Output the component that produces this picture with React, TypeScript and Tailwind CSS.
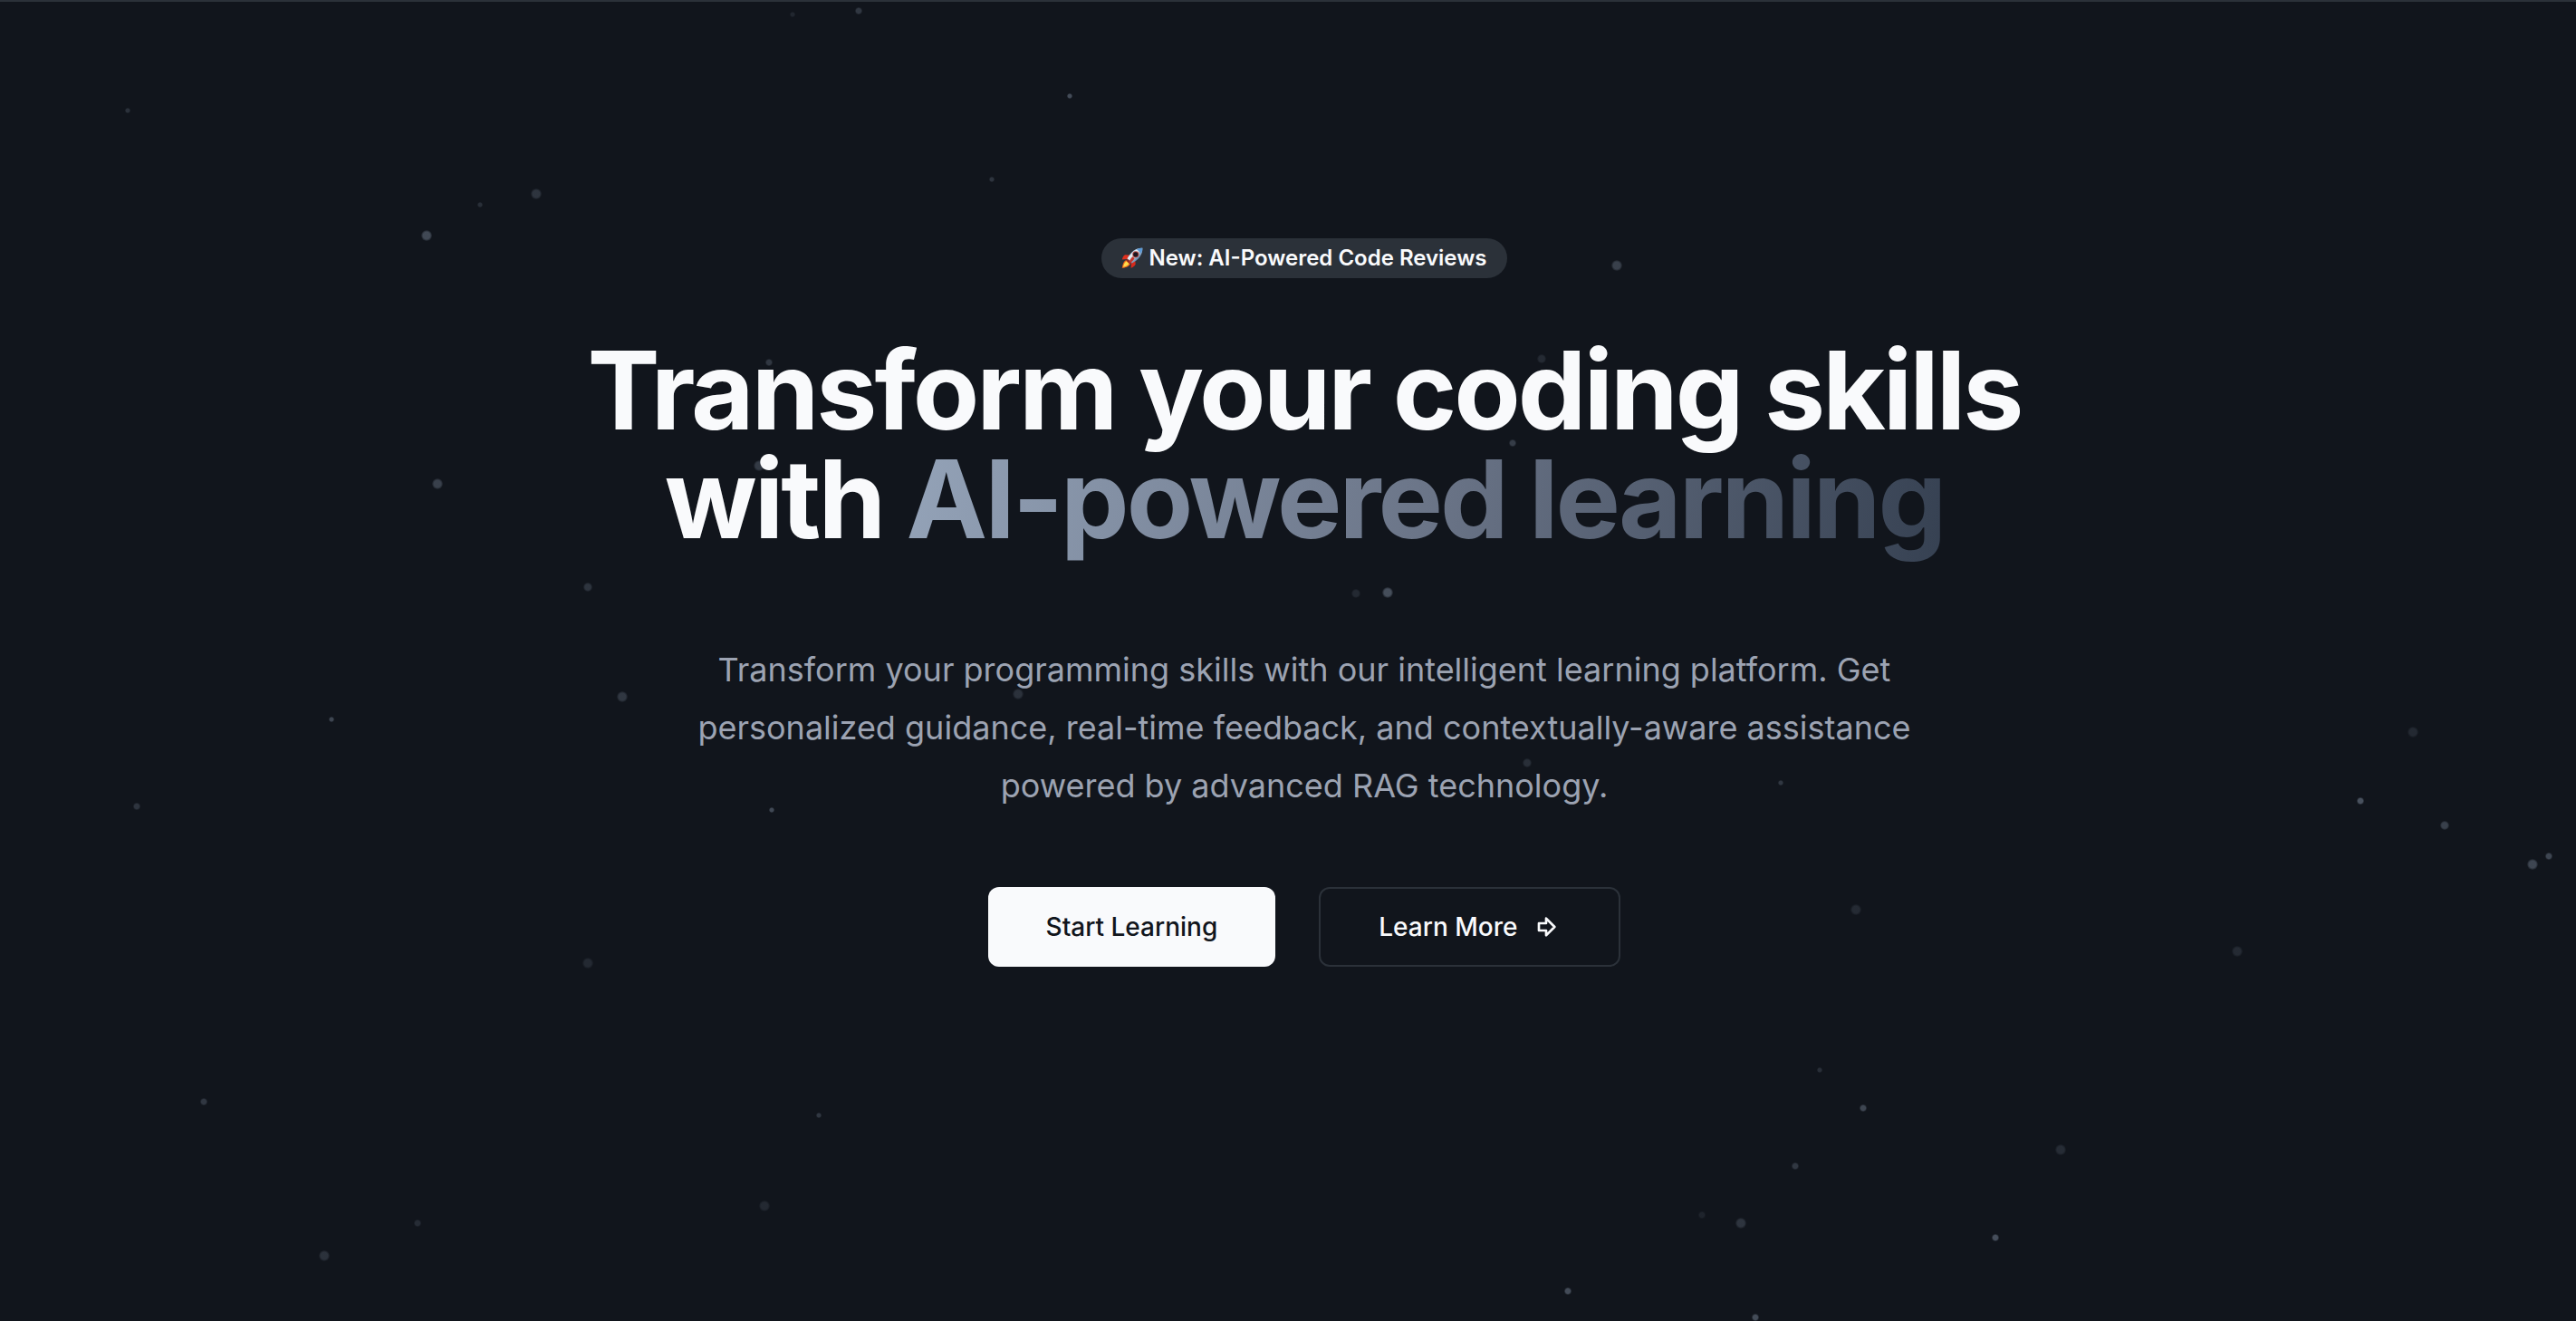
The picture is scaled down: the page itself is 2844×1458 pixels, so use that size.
type Particle = { x: number; y: number; r: number; o: number };

// Positions on a 2844 x 1456 field; drawn as percentages so they spread with the window.
const FIELD_W = 2844;
const FIELD_H = 1456;

const particles: Particle[] = [
  { x: 875, y: 14, r: 3, o: 0.12 },
  { x: 948, y: 10, r: 4, o: 0.24 },
  { x: 141, y: 120, r: 3, o: 0.2 },
  { x: 1181, y: 104, r: 3, o: 0.38 },
  { x: 1095, y: 196, r: 3, o: 0.22 },
  { x: 592, y: 212, r: 6, o: 0.22 },
  { x: 530, y: 224, r: 3, o: 0.18 },
  { x: 471, y: 258, r: 6, o: 0.36 },
  { x: 849, y: 398, r: 4, o: 0.24 },
  { x: 838, y: 512, r: 6, o: 0.26 },
  { x: 483, y: 532, r: 6, o: 0.3 },
  { x: 649, y: 646, r: 5, o: 0.22 },
  { x: 1785, y: 291, r: 6, o: 0.3 },
  { x: 1702, y: 394, r: 5, o: 0.15 },
  { x: 1670, y: 487, r: 4, o: 0.28 },
  { x: 1497, y: 653, r: 5, o: 0.14 },
  { x: 1532, y: 652, r: 6, o: 0.4 },
  { x: 366, y: 792, r: 3, o: 0.34 },
  { x: 687, y: 767, r: 6, o: 0.24 },
  { x: 1124, y: 764, r: 6, o: 0.2 },
  { x: 151, y: 888, r: 4, o: 0.22 },
  { x: 852, y: 892, r: 3, o: 0.36 },
  { x: 649, y: 1061, r: 6, o: 0.14 },
  { x: 225, y: 1214, r: 4, o: 0.24 },
  { x: 904, y: 1229, r: 3, o: 0.24 },
  { x: 844, y: 1329, r: 6, o: 0.14 },
  { x: 461, y: 1348, r: 4, o: 0.16 },
  { x: 358, y: 1384, r: 6, o: 0.2 },
  { x: 2664, y: 806, r: 6, o: 0.14 },
  { x: 1686, y: 840, r: 5, o: 0.18 },
  { x: 1966, y: 862, r: 3, o: 0.24 },
  { x: 2606, y: 882, r: 4, o: 0.42 },
  { x: 2699, y: 909, r: 5, o: 0.3 },
  { x: 2814, y: 943, r: 4, o: 0.34 },
  { x: 2796, y: 952, r: 6, o: 0.34 },
  { x: 2049, y: 1002, r: 6, o: 0.15 },
  { x: 2470, y: 1048, r: 6, o: 0.15 },
  { x: 2009, y: 1179, r: 3, o: 0.18 },
  { x: 2057, y: 1221, r: 4, o: 0.34 },
  { x: 2275, y: 1267, r: 6, o: 0.16 },
  { x: 1982, y: 1285, r: 4, o: 0.24 },
  { x: 1879, y: 1339, r: 4, o: 0.1 },
  { x: 1922, y: 1348, r: 6, o: 0.22 },
  { x: 2203, y: 1364, r: 4, o: 0.4 },
  { x: 1731, y: 1423, r: 4, o: 0.38 },
  { x: 1938, y: 1452, r: 4, o: 0.38 },
];

function ParticleField() {
  return (
    <svg aria-hidden="true" className="pointer-events-none absolute inset-0 size-full">
      <defs>
        <radialGradient id="particle">
          <stop offset="0.65" stopColor="#94a3b8" />
          <stop offset="1" stopColor="#94a3b8" stopOpacity="0.2" />
        </radialGradient>
      </defs>
      {particles.map((p) => (
        <circle
          key={`${p.x}-${p.y}`}
          cx={`${(p.x / FIELD_W) * 100}%`}
          cy={`${(p.y / FIELD_H) * 100}%`}
          r={p.r}
          fill="url(#particle)"
          fillOpacity={p.o}
        />
      ))}
    </svg>
  );
}

function Rocket() {
  return (
    <svg viewBox="0 0 24 24" className="size-6" aria-hidden="true">
      <defs>
        <linearGradient id="rocket-body" x1="8" y1="6" x2="17" y2="15" gradientUnits="userSpaceOnUse">
          <stop offset="0" stopColor="#7db4dc" />
          <stop offset="0.35" stopColor="#eef3f7" />
          <stop offset="0.65" stopColor="#b4bcc6" />
          <stop offset="1" stopColor="#4f7fb0" />
        </linearGradient>
      </defs>
      <path d="M9.500 8.500 4 8.300C2.300 9.500 1.300 11.500.8 13.600l5.600-.6z" fill="#e0301e" />
      <path d="M15.300 14.300l.4 4.400c-1.200 2.200-3 3.300-5.200 4.100l.5-5.500z" fill="#d62a1c" />
      <path d="M5.500 14C2.800 15 1.500 18 .8 22.800 4.500 22.600 8.300 21.500 10 18.300z" fill="#f26a1b" />
      <path d="M5.700 15.300C3.500 16.500 2.500 19 2 21.700c2.800-.5 5.200-1.500 6.500-3.700z" fill="#ffdc4a" />
      <path d="M23.300.7C16.500.6 11 3.800 6 13.300l4.700 4.700C19.800 13.500 23.800 7.500 23.300.7z" fill="url(#rocket-body)" />
      <path d="M23.300.7c-2.400 0-4.600.4-6.700 1.300 1.700 1 3.800 3 5 5.100 1.200-2.100 1.800-4.200 1.700-6.400z" fill="#5c9ad6" />
      <path d="M6.600 12.200 5.400 14.600l4 4 2.500-1.300z" fill="#8a2b25" />
      <path d="M12.500 10.300c-1.700 1.600-3 3.600-4 6l1 .9c2.200-1.200 3.900-2.900 5-5z" fill="#c9352b" />
      <circle cx="15.800" cy="7.800" r="3.500" fill="#b5473f" />
      <circle cx="15.800" cy="7.800" r="2.600" fill="#1b1520" />
    </svg>
  );
}

function ArrowBigRight() {
  return (
    <svg
      viewBox="0 0 24 24"
      className="size-8"
      fill="none"
      stroke="currentColor"
      strokeWidth="2"
      strokeLinecap="round"
      strokeLinejoin="round"
      aria-hidden="true"
    >
      <path d="M6 9h6V5l7 7-7 7v-4H6V9z" />
    </svg>
  );
}

export default function App() {
  return (
    <main className="relative min-h-screen overflow-hidden border-t-2 border-[#2b3139] bg-[#11151c] font-[Inter,sans-serif] text-[#f9fafc]">
      <ParticleField />
      <section className="relative flex flex-col items-center pt-[261px] pr-8 pb-32 pl-17 text-center">
        <div className="flex items-center gap-1.5 rounded-full bg-[#2b3139] px-[22px] py-1.5 text-2xl leading-8 font-semibold">
          <Rocket />
          <span>New: AI-Powered Code Reviews</span>
        </div>
        <h1 className="mt-16 text-[120px] leading-none font-bold tracking-tight">
          Transform your coding skills
          <br />
          with{" "}
          <span className="bg-linear-[100deg,#94a3b8,#6b7588_50%,#364152] bg-clip-text text-transparent">
            AI-powered learning
          </span>
        </h1>
        <p className="mt-24 max-w-[1344px] text-4xl leading-16 text-[#9ca3b2]">
          Transform your programming skills with our intelligent learning platform. Get personalized
          guidance, real-time feedback, and contextually-aware assistance powered by advanced RAG
          technology.
        </p>
        <div className="mt-20 flex items-center gap-12 text-[28px] leading-10 font-medium">
          <button type="button" className="h-22 rounded-xl bg-[#f9fafc] px-16 text-[#11151c]">
            Start Learning
          </button>
          <button
            type="button"
            className="flex h-22 items-center gap-4 rounded-xl border-2 border-[#2b3139] bg-[#11151c] px-16"
          >
            Learn More
            <ArrowBigRight />
          </button>
        </div>
      </section>
    </main>
  );
}
